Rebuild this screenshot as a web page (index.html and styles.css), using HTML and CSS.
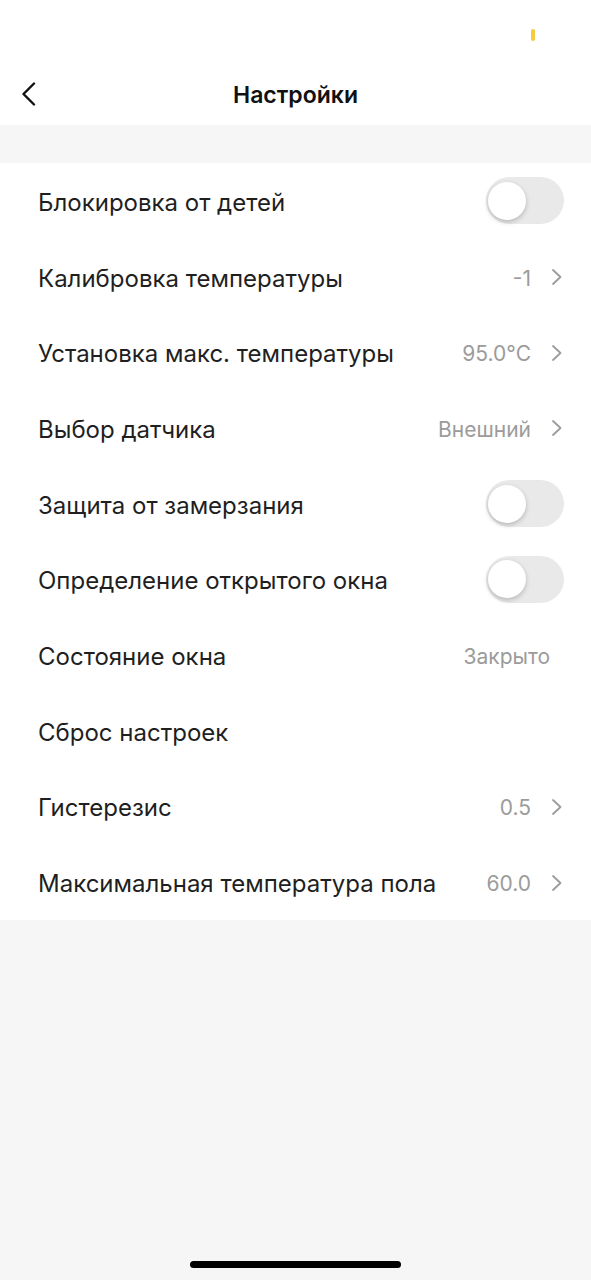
FILE: index.html
```html
<!DOCTYPE html>
<html lang="ru">
<head>
    <meta charset="UTF-8">
    <meta name="viewport" content="width=device-width, initial-scale=1.0">
    <title>Настройки</title>
    <link rel="stylesheet" href="styles.css">
</head>
<body>
    <div class="screen">
        <div class="status-bar">
            <span class="status-dot"></span>
        </div>
        <div class="nav-bar">
            <button class="back-btn" aria-label="Назад">
                <svg width="16" height="24" viewBox="0 0 16 24">
                    <path d="M13 1.5 L2.5 12 L13 22.5" fill="none" stroke="#111" stroke-width="2.4" stroke-linecap="round" stroke-linejoin="round"/>
                </svg>
            </button>
            <h1 class="nav-title">Настройки</h1>
        </div>

        <div class="gap"></div>

        <ul class="settings-list">
            <li class="row">
                <span class="row-label">Блокировка от детей</span>
                <span class="switch"><span class="knob"></span></span>
            </li>
            <li class="row">
                <span class="row-label">Калибровка температуры</span>
                <span class="row-value">-1</span>
                <span class="chevron"><svg width="12" height="18" viewBox="0 0 12 18"><path d="M2 2 L9.5 9 L2 16" fill="none" stroke="#9b9b9b" stroke-width="1.8" stroke-linecap="round" stroke-linejoin="round"/></svg></span>
            </li>
            <li class="row">
                <span class="row-label">Установка макс. температуры</span>
                <span class="row-value">95.0°C</span>
                <span class="chevron"><svg width="12" height="18" viewBox="0 0 12 18"><path d="M2 2 L9.5 9 L2 16" fill="none" stroke="#9b9b9b" stroke-width="1.8" stroke-linecap="round" stroke-linejoin="round"/></svg></span>
            </li>
            <li class="row">
                <span class="row-label">Выбор датчика</span>
                <span class="row-value">Внешний</span>
                <span class="chevron"><svg width="12" height="18" viewBox="0 0 12 18"><path d="M2 2 L9.5 9 L2 16" fill="none" stroke="#9b9b9b" stroke-width="1.8" stroke-linecap="round" stroke-linejoin="round"/></svg></span>
            </li>
            <li class="row">
                <span class="row-label">Защита от замерзания</span>
                <span class="switch"><span class="knob"></span></span>
            </li>
            <li class="row">
                <span class="row-label">Определение открытого окна</span>
                <span class="switch"><span class="knob"></span></span>
            </li>
            <li class="row">
                <span class="row-label">Состояние окна</span>
                <span class="row-value plain">Закрыто</span>
            </li>
            <li class="row">
                <span class="row-label">Сброс настроек</span>
            </li>
            <li class="row">
                <span class="row-label">Гистерезис</span>
                <span class="row-value">0.5</span>
                <span class="chevron"><svg width="12" height="18" viewBox="0 0 12 18"><path d="M2 2 L9.5 9 L2 16" fill="none" stroke="#9b9b9b" stroke-width="1.8" stroke-linecap="round" stroke-linejoin="round"/></svg></span>
            </li>
            <li class="row">
                <span class="row-label">Максимальная температура пола</span>
                <span class="row-value">60.0</span>
                <span class="chevron"><svg width="12" height="18" viewBox="0 0 12 18"><path d="M2 2 L9.5 9 L2 16" fill="none" stroke="#9b9b9b" stroke-width="1.8" stroke-linecap="round" stroke-linejoin="round"/></svg></span>
            </li>
        </ul>

        <div class="filler">
            <span class="home-indicator"></span>
        </div>
    </div>
</body>
</html>
```

FILE: styles.css
```css
* {
    box-sizing: border-box;
}
body {
    margin: 0;
    font-family: Inter, "Noto Sans", Arial, sans-serif;
    color: #1c1c1c;
    background-color: #f6f6f6;
}
.screen {
    display: flex;
    flex-direction: column;
    width: 591px;
    height: 1280px;
}
.status-bar {
    height: 62px;
    background-color: #fff;
    display: flex;
    justify-content: flex-end;
    padding: 29px 56px 0 0;
}
.status-dot {
    width: 4px;
    height: 12px;
    border-radius: 2px;
    background-color: #f3cd3c;
}
.nav-bar {
    height: 63px;
    background-color: #fff;
    display: flex;
    align-items: center;
    justify-content: center;
    position: relative;
}
.back-btn {
    position: absolute;
    left: 21px;
    top: 20px;
    border: none;
    background: none;
    padding: 0;
    display: flex;
}
.nav-title {
    margin: 3px 0 0;
    font-size: 23px;
    font-weight: 600;
    color: #111;
}
.gap {
    height: 38px;
}
.settings-list {
    list-style: none;
    margin: 0;
    padding: 0;
    background-color: #fff;
}
.row {
    height: 75.7px;
    display: flex;
    align-items: center;
    padding: 0 27px 0 38px;
}
.row-label {
    flex: 1;
    font-size: 24px;
    color: #1f1f1f;
    padding-top: 3px;
}
.row-value {
    font-size: 21px;
    color: #9b9b9b;
    margin-right: 20px;
    padding-top: 3px;
}
.row-value.plain {
    margin-right: 14px;
}
.chevron {
    display: flex;
    margin: 1px 1px 0 0;
}
.switch {
    width: 78px;
    height: 47px;
    border-radius: 24px;
    background-color: #e9e9ea;
    display: flex;
    align-items: center;
    padding-left: 2px;
}
.knob {
    width: 38px;
    height: 38px;
    border-radius: 50%;
    background-color: #fff;
    box-shadow: 0 2px 5px rgba(0, 0, 0, 0.22);
}
.filler {
    flex: 1;
    display: flex;
    align-items: flex-end;
    justify-content: center;
    padding-bottom: 12px;
}
.home-indicator {
    width: 211px;
    height: 7px;
    border-radius: 4px;
    background-color: #000;
}
```
